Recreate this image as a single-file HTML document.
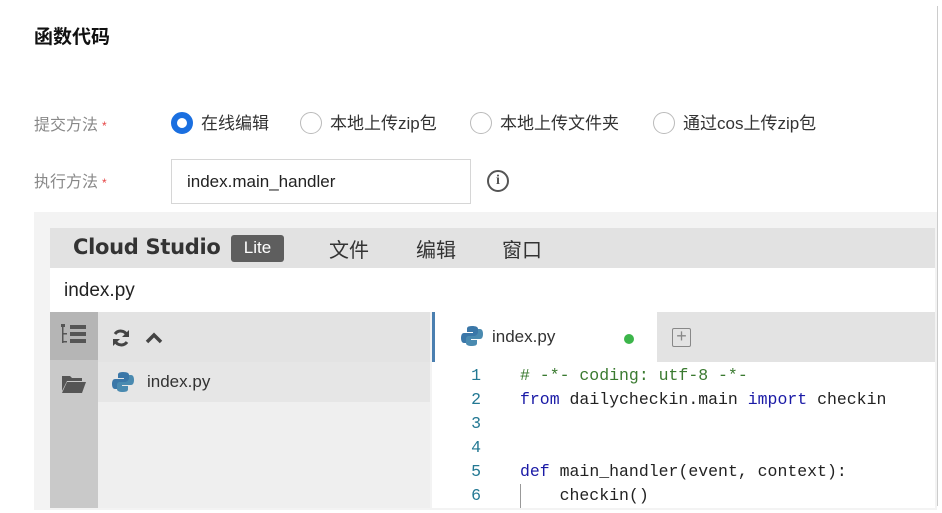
<!DOCTYPE html>
<html><head><meta charset="utf-8"><style>
*{margin:0;padding:0;box-sizing:border-box}
body{width:942px;height:513px;background:#fff;position:relative;overflow:hidden;font-family:"Liberation Sans","Noto Sans CJK SC",sans-serif;color:#333}
.a{position:absolute}
.lbl{color:#888;font-size:16px;line-height:22px}
.lbl i{color:#e54545;font-style:normal;font-size:12px;margin-left:4px}
.radio{width:22px;height:22px;border-radius:50%;border:1px solid #bbb;background:#fff}
.rt{font-size:17px;color:#333;line-height:22px}
.mono{font-family:"Liberation Mono","DejaVu Sans Mono",monospace;font-size:16.5px}
.ln{color:#237893;width:40px;text-align:right}
</style></head><body>
<div class="a" style="left:34px;top:22px;font-size:19px;font-weight:bold;color:#111">函数代码</div>
<div class="a" style="right:4px;top:6px;width:1px;height:500px;background:#ccc"></div>

<div class="a lbl" style="left:34px;top:115px">提交方法<i>*</i></div>
<div class="a radio" style="left:171px;top:112px;border:6px solid #1a6fe0"></div>
<div class="a rt" style="left:201px;top:113px">在线编辑</div>
<div class="a radio" style="left:300px;top:112px"></div>
<div class="a rt" style="left:330px;top:113px">本地上传zip包</div>
<div class="a radio" style="left:470px;top:112px"></div>
<div class="a rt" style="left:500px;top:113px">本地上传文件夹</div>
<div class="a radio" style="left:653px;top:112px"></div>
<div class="a rt" style="left:683px;top:113px">通过cos上传zip包</div>

<div class="a lbl" style="left:34px;top:172px">执行方法<i>*</i></div>
<div class="a" style="left:171px;top:159px;width:300px;height:45px;border:1px solid #d6d6d6;padding:12px 15px;font-size:17px;color:#222">index.main_handler</div>
<div class="a" style="left:487px;top:170px;width:22px;height:22px;border:2px solid #555;border-radius:50%;text-align:center;font:bold 14px/18px 'Liberation Serif',serif;color:#555">i</div>

<div class="a" style="left:34px;top:212px;width:903px;height:298px;background:#f3f3f3"></div>
<div class="a" style="left:50px;top:228px;width:885px;height:40px;background:#e2e2e2"></div>
<div class="a" style="left:73px;top:235px;font-family:'DejaVu Sans',sans-serif;font-weight:bold;font-size:21px;color:#333;letter-spacing:-0.3px">Cloud Studio</div>
<div class="a" style="left:231px;top:235px;width:53px;height:27px;background:#5e5e5e;border-radius:3px;color:#fff;font-size:17px;text-align:center;line-height:26px">Lite</div>
<div class="a" style="left:329px;top:234px;font-size:20px;color:#333">文件</div>
<div class="a" style="left:416px;top:234px;font-size:20px;color:#333">编辑</div>
<div class="a" style="left:502px;top:234px;font-size:20px;color:#333">窗口</div>

<div class="a" style="left:50px;top:268px;width:885px;height:44px;background:#fff"></div>
<div class="a" style="left:64px;top:280px;font-size:19px;color:#222">index.py</div>

<div class="a" style="left:50px;top:312px;width:48px;height:196px;background:#c9c9c9"></div>
<div class="a" style="left:50px;top:312px;width:48px;height:48px;background:#b5b5b5"></div>
<svg class="a" style="left:61px;top:324px" width="26" height="22" viewBox="0 0 26 22"><g fill="#555"><rect x="0" y="0" width="4" height="3"/><rect x="1" y="3" width="1.5" height="16"/><rect x="1" y="9" width="5" height="1.5"/><rect x="1" y="17" width="5" height="1.5"/><rect x="9" y="1" width="16" height="4"/><rect x="9" y="8" width="16" height="4"/><rect x="9" y="15" width="16" height="4"/></g></svg>
<svg class="a" style="left:62px;top:374px" width="24" height="19" viewBox="0 0 24 19"><path d="M0 2h8l2 2h10v3H5L0 17z" fill="#555"/><path d="M5 8h19l-4 11H0z" fill="#555"/></svg>

<div class="a" style="left:98px;top:312px;width:332px;height:196px;background:#efefef"></div>
<div class="a" style="left:98px;top:312px;width:332px;height:50px;background:#e3e3e3"></div>
<div class="a" style="left:98px;top:362px;width:332px;height:40px;background:#e6e6e6"></div>
<svg class="a" style="left:111px;top:328px" width="20" height="20" viewBox="0 0 20 20"><path d="M16 7A7 7 0 0 0 4 6" stroke="#444" stroke-width="3" fill="none"/><path d="M4 13a7 7 0 0 0 12 1" stroke="#444" stroke-width="3" fill="none"/><path d="M18 2v7h-7z" fill="#444"/><path d="M2 18v-7h7z" fill="#444"/></svg>
<svg class="a" style="left:145px;top:331px" width="18" height="14" viewBox="0 0 18 14"><path d="M2 11l7-7 7 7" stroke="#444" stroke-width="3.5" fill="none"/></svg>
<svg class="a" style="left:112px;top:371px" width="22" height="22" viewBox="0 0 22 22"><path d="M11 1c-5 0-5 2-5 3v3h6v1H3c-2 0-3 2-3 5s1 5 3 5h2v-3c0-2 2-4 4-4h5c2 0 3-1 3-3V4c0-2-2-3-6-3z" fill="#3b77a8"/><path d="M11 21c5 0 5-2 5-3v-3h-6v-1h9c2 0 3-2 3-5s-1-5-3-5h-2v3c0 2-2 4-4 4H8c-2 0-3 1-3 3v4c0 2 2 3 6 3z" fill="#4a8ab0"/></svg>
<div class="a" style="left:147px;top:372px;font-size:17px;color:#333">index.py</div>

<div class="a" style="left:432px;top:312px;width:503px;height:196px;background:#fff"></div>
<div class="a" style="left:432px;top:312px;width:503px;height:50px;background:#e3e3e3"></div>
<div class="a" style="left:432px;top:312px;width:225px;height:50px;background:#fff;border-left:3px solid #4a7fb0"></div>
<svg class="a" style="left:461px;top:325px" width="22" height="22" viewBox="0 0 22 22"><path d="M11 1c-5 0-5 2-5 3v3h6v1H3c-2 0-3 2-3 5s1 5 3 5h2v-3c0-2 2-4 4-4h5c2 0 3-1 3-3V4c0-2-2-3-6-3z" fill="#3b77a8"/><path d="M11 21c5 0 5-2 5-3v-3h-6v-1h9c2 0 3-2 3-5s-1-5-3-5h-2v3c0 2-2 4-4 4H8c-2 0-3 1-3 3v4c0 2 2 3 6 3z" fill="#4a8ab0"/></svg>
<div class="a" style="left:492px;top:327px;font-size:17px;color:#333">index.py</div>
<div class="a" style="left:624px;top:334px;width:10px;height:10px;border-radius:50%;background:#3cb54a"></div>
<div class="a" style="left:672px;top:328px;width:19px;height:19px;border:1.5px solid #888;border-radius:2px;color:#888;font-size:18px;line-height:15px;text-align:center">+</div>

<div class="a mono" style="left:441px;top:364px;line-height:24px">
<div class="ln">1</div><div class="ln">2</div><div class="ln">3</div><div class="ln">4</div><div class="ln">5</div><div class="ln">6</div></div>
<div class="a mono" style="left:520px;top:364px;line-height:24px;white-space:pre;color:#222"><span style="color:#3a7a30"># -*- coding: utf-8 -*-</span>
<span style="color:#1a1aa6">from</span> dailycheckin.main <span style="color:#1a1aa6">import</span> checkin


<span style="color:#1a1aa6">def</span> main_handler(event, context):
    checkin()</div>
<div class="a" style="left:520px;top:484px;width:1px;height:24px;background:#999"></div>
</body></html>
